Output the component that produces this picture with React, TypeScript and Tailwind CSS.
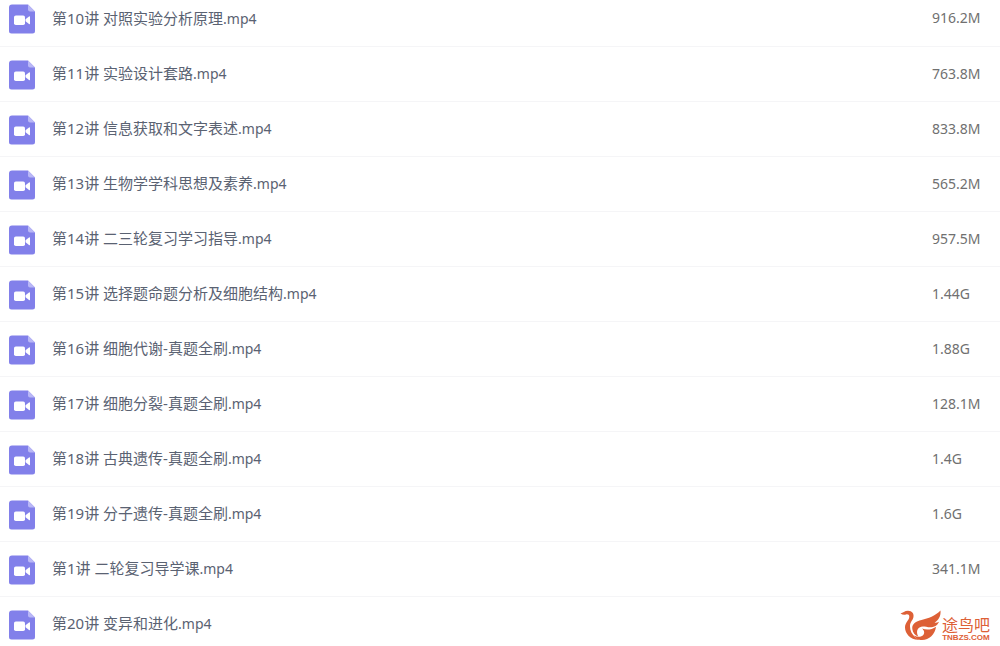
interface VideoFile {
  name: string
  ext: string
  size?: string
}

const files: VideoFile[] = [
  { name: "第10讲 对照实验分析原理", ext: ".mp4", size: "916.2M" },
  { name: "第11讲 实验设计套路", ext: ".mp4", size: "763.8M" },
  { name: "第12讲 信息获取和文字表述", ext: ".mp4", size: "833.8M" },
  { name: "第13讲 生物学学科思想及素养", ext: ".mp4", size: "565.2M" },
  { name: "第14讲 二三轮复习学习指导", ext: ".mp4", size: "957.5M" },
  { name: "第15讲 选择题命题分析及细胞结构", ext: ".mp4", size: "1.44G" },
  { name: "第16讲 细胞代谢-真题全刷", ext: ".mp4", size: "1.88G" },
  { name: "第17讲 细胞分裂-真题全刷", ext: ".mp4", size: "128.1M" },
  { name: "第18讲 古典遗传-真题全刷", ext: ".mp4", size: "1.4G" },
  { name: "第19讲 分子遗传-真题全刷", ext: ".mp4", size: "1.6G" },
  { name: "第1讲 二轮复习导学课", ext: ".mp4", size: "341.1M" },
  { name: "第20讲 变异和进化", ext: ".mp4" },
]

function VideoIcon() {
  return (
    <svg className="mt-0.5 h-[30px] w-[28px] shrink-0" viewBox="0 0 28 30" aria-hidden="true">
      <path d="M4 0.5H20L27 7.5V27a2.500 2.500 0 0 1-2.500 2.500H3.500a2.500 2.500 0 0 1-2.500-2.500V3.500a3 3 0 0 1 3-3Z" fill="#8280ea" />
      <path d="M20 0.500L27 7.500H22a2 2 0 0 1-2-2Z" fill="#b9b7f6" />
      <rect x="6" y="11.500" width="11" height="9.500" rx="1.800" fill="#fff" />
      <path d="M17.500 15.300L21 12.500q1-.6 1 .5v6.500q0 1.100-1 .5L17.500 17.200Z" fill="#fff" />
    </svg>
  )
}

function BirdLogo() {
  return (
    <svg className="h-8 w-[42px]" viewBox="0 0 42 32" fill="#dd6036" aria-hidden="true">
      <path d="M0.500 3.500C3 3 4.500 0.800 8 0.800C12 0.800 14.500 4 13.300 7.800C12.200 11 10 12.500 10 16.500C10 20.500 12 24.500 15.500 27.500C16.700 28.500 18 29.200 19.500 29.600C11.500 30.500 5 24 5 17.500C5 12.500 9.300 10 9.300 6.700C9.300 4.700 8 4 6 4.400C4 4.900 2.500 4.700 0.500 3.500Z" />
      <path d="M12.300 19C11.800 13.500 16 11.500 21.500 10C28.500 8.200 35 6 40.500 0.500C41 6 38.500 10.500 34.500 12.600C36 12.900 37.500 12.500 39 11.700C37.500 15.500 34 17.300 30 17.300C26 17.300 22.500 15.500 19.500 17.500C16.500 19.500 16.500 23 18.300 26.500C15 25.500 12.700 22.500 12.300 19Z" />
      <path d="M22 18.500C27 20.500 31.500 19.700 36 16.700C35 25 28.500 30.700 20.500 29.900C17.500 29.600 15.200 27.800 14 25.500C17 27.300 20.500 27.300 22.800 25.500C25 23.500 24.500 20.500 22 18.500Z" />
    </svg>
  )
}

function Watermark() {
  return (
    <div className="absolute right-2.5 bottom-1 flex items-end text-[#dd6036]">
      <BirdLogo />
      <div className="flex flex-col items-center">
        <span className="text-base leading-[18px]">途鸟吧</span>
        <span className="font-['Liberation_Sans',sans-serif] text-[8px] leading-2 font-bold">TNBZS.COM</span>
      </div>
    </div>
  )
}

function FileRow({ file }: { file: VideoFile }) {
  return (
    <tr className="h-[55px] border-b border-[#f5f5f7]">
      <th scope="row" className="p-0 text-left font-normal">
        <div className="flex items-center gap-4 pl-2">
          <VideoIcon />
          <span className="text-[15px] leading-5 text-[#5a6272]">
            {file.name}
            <span className="text-sm">{file.ext}</span>
          </span>
        </div>
      </th>
      <td className="w-[68px] p-0 text-sm leading-5 text-[#707070]">{file.size}</td>
    </tr>
  )
}

export default function App() {
  return (
    <main className="relative h-screen overflow-hidden bg-white font-['Noto_Sans','Noto_Sans_CJK_SC',sans-serif]">
      {/* list is scrolled, so the first row is partly out of view */}
      <table className="-mt-[9px] w-full border-collapse">
        <tbody>
          {files.map((file) => (
            <FileRow key={file.name} file={file} />
          ))}
        </tbody>
      </table>
      <Watermark />
    </main>
  )
}
